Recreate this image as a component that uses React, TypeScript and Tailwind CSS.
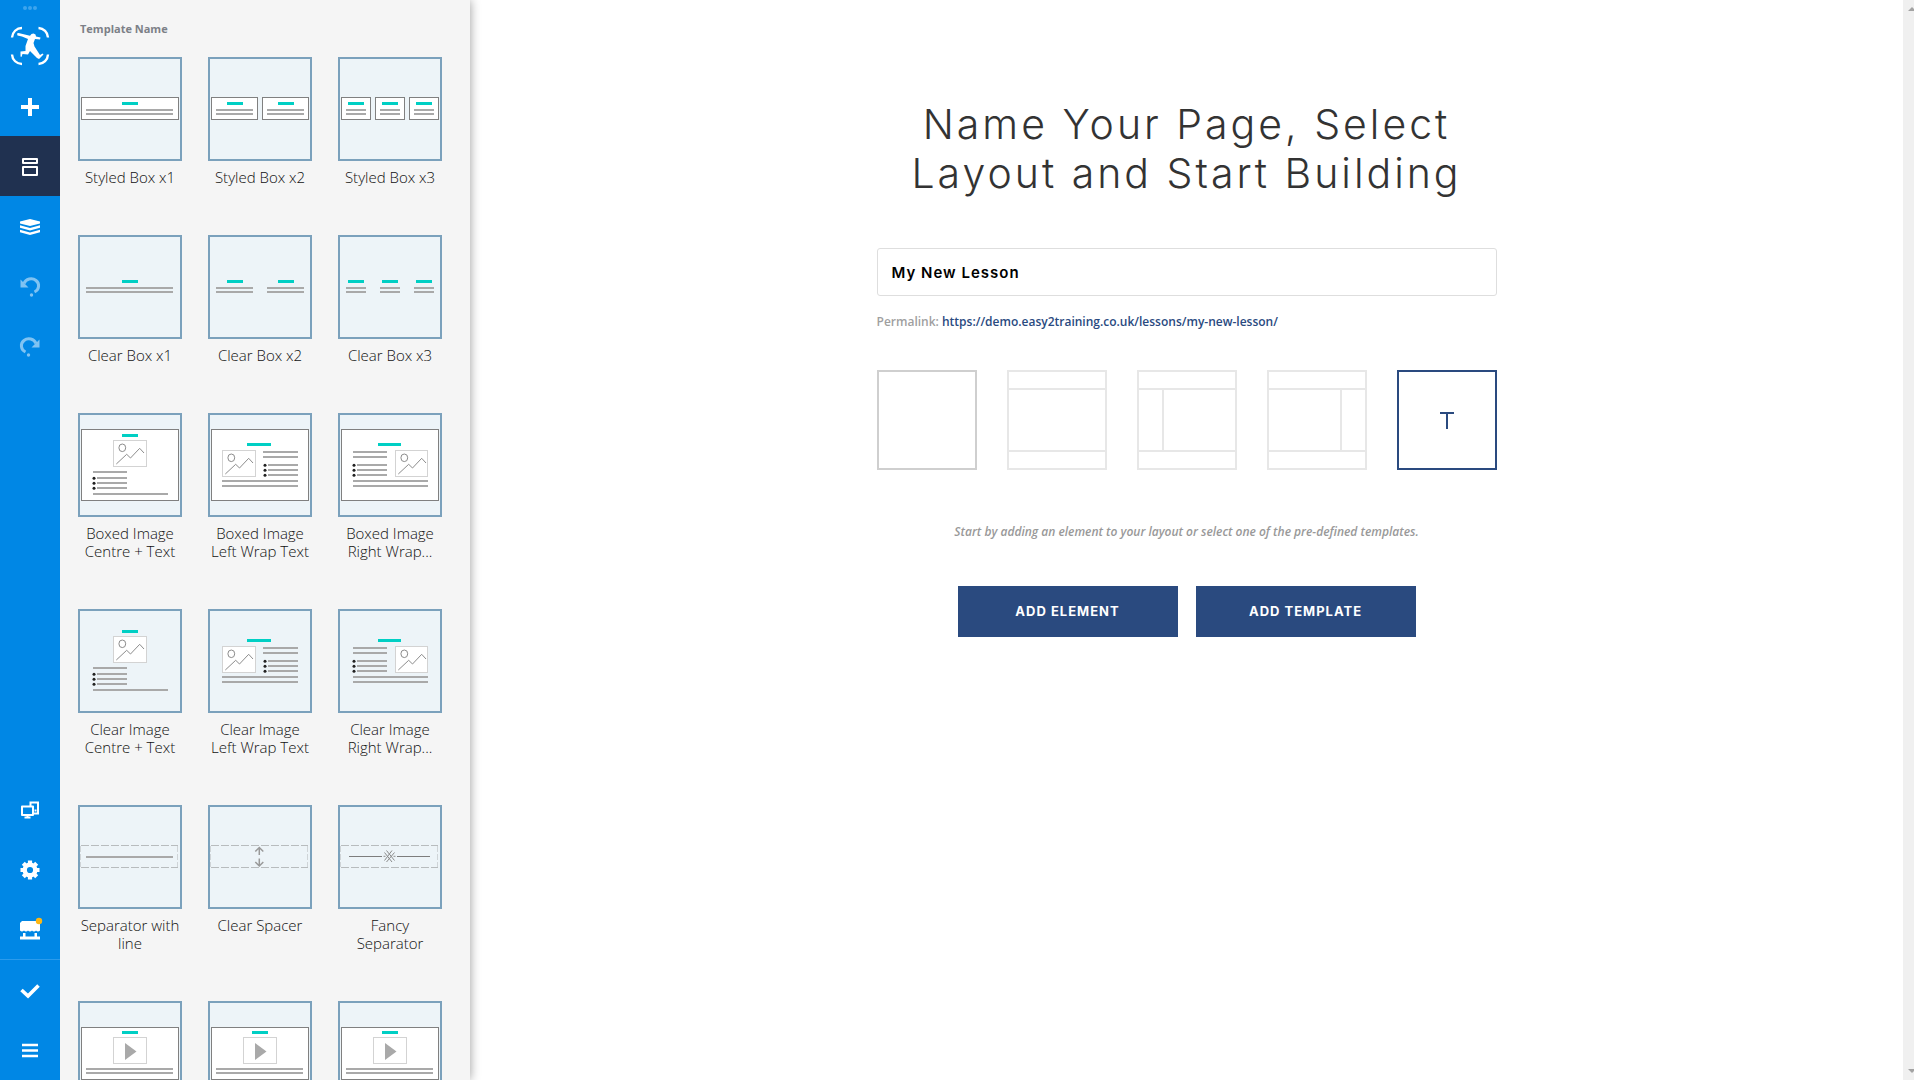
import React, { useState } from "react"

    const TEAL = '#00cfc4';
    const GREY = '#a9a9a9';

    const Bar = ({ x, y, w }: { x: number; y: number; w: number }) => (
      <rect x={x} y={y} width={w} height={2} fill={GREY} />
    );

    const Heading = ({ x, y, w = 16 }: { x: number; y: number; w?: number }) => (
      <rect x={x} y={y} width={w} height={3} fill={TEAL} />
    );

    const Frame = ({ x = 1, y, w = 98, h }: { x?: number; y: number; w?: number; h: number }) => (
      <rect x={x + 0.5} y={y + 0.5} width={w - 1} height={h - 1} fill="#fff" stroke="#808080" />
    );

    const Picture = ({ x, y, w = 34 }: { x: number; y: number; w?: number }) => (
      <g transform={`translate(${x} ${y})`} fill="none">
        <rect x={0.5} y={0.5} width={w - 1} height={26} fill="#fff" stroke="#d3d3d3" />
        <ellipse cx={9.3} cy={7.8} rx={3.4} ry={3.8} stroke="#8c8c8c" />
        <path d="M3.3 24 13.7 14.3 17.5 18 26.7 8.3 31 13" stroke="#8c8c8c" />
      </g>
    );

    const Bullets = ({ x, y, w }: { x: number; y: number; w: number }) => (
      <>
        {[0, 5, 10].map((dy) => (
          <g key={dy}>
            <circle cx={x + 1} cy={y + dy + 1.2} r={1.5} fill="#222" />
            <Bar x={x + 4} y={y + dy} w={w} />
          </g>
        ))}
      </>
    );

    const DashedBox = () => (
      <g fill="none" stroke="#b8bcbe">
        <path d="M1 38.5H98M1 60.5H98" strokeDasharray="8 2" />
        <path d="M.5 39V60M97.5 39V60" strokeDasharray="6 2" stroke="#cfd4d7" />
      </g>
    );

    // x, column width for the one, two and three box templates
    const columns: Record<number, { x: number; w: number }[]> = {
      1: [{ x: 1, w: 98 }],
      2: [{ x: 1, w: 47 }, { x: 52, w: 47 }],
      3: [{ x: 1, w: 30 }, { x: 35, w: 30 }, { x: 69, w: 30 }],
    };

    const Boxes = ({ count, boxed }: { count: number; boxed?: boolean }) => (
      <>
        {columns[count].map(({ x, w }) => (
          <g key={x}>
            {boxed && <Frame x={x} y={38} w={w} h={23} />}
            <Heading x={x + Math.ceil((w - 16) / 2)} y={43} />
            <Bar x={x + 5} y={50} w={w === 98 ? 87 : w - 10} />
            <Bar x={x + 5} y={54} w={w === 98 ? 87 : w - 10} />
          </g>
        ))}
      </>
    );

    const ImageCentre = ({ boxed }: { boxed?: boolean }) => (
      <>
        {boxed && <Frame y={14} h={72} />}
        <Heading x={42} y={19} />
        <Picture x={33} y={25} />
        <Bar x={13} y={56} w={34} />
        <Bullets x={13} y={62} w={30} />
        <Bar x={13} y={78} w={75} />
      </>
    );

    const ImageLeft = ({ boxed }: { boxed?: boolean }) => (
      <>
        {boxed && <Frame y={14} h={72} />}
        <Heading x={37} y={28} w={24} />
        <Picture x={12} y={35} />
        <Bar x={53} y={36} w={35} />
        <Bar x={53} y={41} w={35} />
        <Bullets x={54} y={49} w={30} />
        <Bar x={12} y={65} w={76} />
        <Bar x={12} y={70} w={76} />
      </>
    );

    const ImageRight = ({ boxed }: { boxed?: boolean }) => (
      <>
        {boxed && <Frame y={14} h={72} />}
        <Heading x={38} y={28} w={23} />
        <Picture x={55} y={35} w={33} />
        <Bar x={13} y={36} w={34} />
        <Bar x={13} y={41} w={34} />
        <Bullets x={13} y={49} w={30} />
        <Bar x={13} y={65} w={75} />
        <Bar x={13} y={70} w={75} />
      </>
    );

    const Video = () => (
      <>
        <Frame y={24} h={53} />
        <Heading x={42} y={28} />
        <rect x={33.5} y={34.5} width={33} height={26} fill="#fff" stroke="#d3d3d3" />
        <path d="M45 40V57L56.5 48.5Z" fill={GREY} />
        <Bar x={6} y={65} w={87} />
        <Bar x={6} y={69} w={87} />
      </>
    );

    const SeparatorLine = () => (
      <>
        <DashedBox />
        <Bar x={6} y={49} w={87} />
      </>
    );

    const Spacer = () => (
      <>
        <DashedBox />
        <path d="M49.3 48V40.5M45.3 44.5 49.3 40.5 53.3 44.5M49.3 51.5V59M45.3 55 49.3 59 53.3 55" fill="none" stroke="#999" strokeWidth={1.5} />
      </>
    );

    const FancySeparator = () => (
      <>
        <DashedBox />
        <path d="M9 49.5H42M57 49.5H90" stroke="#7d7d7d" />
        <path d="M44.5 45.5 52 55M46.5 43.5 54.5 53.5M54.5 45.5 46.5 55M52 43.5 44.5 53.5M43.5 49.3h2M53.5 49.3h2" stroke="#8c8c8c" fill="none" />
      </>
    );

    const templates = [
      { name: 'Styled Box x1', art: <Boxes count={1} boxed /> },
      { name: 'Styled Box x2', art: <Boxes count={2} boxed /> },
      { name: 'Styled Box x3', art: <Boxes count={3} boxed /> },
      { name: 'Clear Box x1', art: <Boxes count={1} /> },
      { name: 'Clear Box x2', art: <Boxes count={2} /> },
      { name: 'Clear Box x3', art: <Boxes count={3} /> },
      { name: 'Boxed Image Centre + Text', art: <ImageCentre boxed /> },
      { name: 'Boxed Image Left Wrap Text', art: <ImageLeft boxed /> },
      { name: 'Boxed Image Right Wrap...', art: <ImageRight boxed /> },
      { name: 'Clear Image Centre + Text', art: <ImageCentre /> },
      { name: 'Clear Image Left Wrap Text', art: <ImageLeft /> },
      { name: 'Clear Image Right Wrap...', art: <ImageRight /> },
      { name: 'Separator with line', art: <SeparatorLine /> },
      { name: 'Clear Spacer', art: <Spacer /> },
      { name: 'Fancy Separator', art: <FancySeparator /> },
    ];

    const videoTemplates = ['Video x1', 'Video x2', 'Video x3'];

    const icons = {
      plus: <path d="M12 3v18M3 12h18" stroke="#fff" strokeWidth={4} />,
      layout: <path d="M5 4h14v4H5zM5 12h14v8H5z" fill="none" stroke="#fff" strokeWidth={2} strokeLinejoin="round" />,
      layers: (
        <g fill="#fff">
          <path d="M12 4 22 6.4V8.4L12 11 2 8.4V6.4Z" />
          <path d="M2 10.3 12 13 22 10.3V12.8L12 15.6 2 12.8Z" />
          <path d="M2 14.8 12 17.4 22 14.8V17.3L12 20 2 17.3Z" />
        </g>
      ),
      undo: (
        <g fill="none" stroke="#fff" strokeWidth={3} opacity={0.5}>
          <path d="M6 8.5A7.5 7 0 1 1 16.5 17" />
          <path d="M2.5 4.5v8h8L7.8 9.8 5.5 7.5Z" fill="#fff" stroke="none" />
          <circle cx={13.5} cy={20} r={1.7} fill="#fff" stroke="none" />
        </g>
      ),
      redo: (
        <g fill="none" stroke="#fff" strokeWidth={3} opacity={0.5}>
          <path d="M18 8.5A7.5 7 0 1 0 7.5 17" />
          <path d="M21.5 4.5v8h-8L16.2 9.8 18.5 7.5Z" fill="#fff" stroke="none" />
          <circle cx={10.5} cy={20} r={1.7} fill="#fff" stroke="none" />
        </g>
      ),
      devices: (
        <g fill="none" stroke="#fff" strokeWidth={2}>
          <path d="M12.5 8V4.5h7.5V15.5h-5M16.5 12.5h2" />
          <path d="M4 8.5h11v8.5H4z" strokeLinejoin="round" />
          <path d="M6.5 19.5h6M9.5 17v3" />
        </g>
      ),
      gear: (
        <g>
          <circle cx={12} cy={12} r={5.3} fill="none" stroke="#fff" strokeWidth={4.4} />
          <path d="M12 2.5v3M12 18.5v3M2.5 12h3M18.5 12h3M5.3 5.3l2 2M16.7 16.7l2 2M5.3 18.7l2-2M16.7 7.3l2-2" stroke="#fff" strokeWidth={4.2} />
        </g>
      ),
      store: (
        <g fill="#fff">
          <path d="M4 3H20L22 6V12.5a2.5 1.8 0 0 1-4 0a2.3 1.8 0 0 1-4 0a2.3 1.8 0 0 1-4 0a2.3 1.8 0 0 1-4 0a2.5 1.8 0 0 1-4 0V5Z" />
          <path d="M5 15h2.5v3.5h9V15H19v3.5h3V21.5H2V18.5H5Z" />
          <circle cx={21} cy={3} r={3.2} fill="#fdb714" />
        </g>
      ),
      check: <path d="M3.5 11 10 17 20.5 6.5" fill="none" stroke="#fff" strokeWidth={3.6} />,
      menu: <path d="M4 6h16M4 11.5h16M4 17h16" stroke="#fff" strokeWidth={2.6} />,
    };

    type IconName = keyof typeof icons;

    const tools: { label: string; icon: IconName; active?: boolean }[] = [
      { label: 'Add element', icon: 'plus' },
      { label: 'Templates', icon: 'layout', active: true },
      { label: 'Layers', icon: 'layers' },
      { label: 'Undo', icon: 'undo' },
      { label: 'Redo', icon: 'redo' },
    ];

    const settings: { label: string; icon: IconName }[] = [
      { label: 'Responsive view', icon: 'devices' },
      { label: 'Settings', icon: 'gear' },
      { label: 'Store', icon: 'store' },
    ];

    const actions: { label: string; icon: IconName }[] = [
      { label: 'Publish', icon: 'check' },
      { label: 'Menu', icon: 'menu' },
    ];

    const ToolButton = ({ label, icon, active }: { label: string; icon: IconName; active?: boolean }) => (
      <button
        type="button"
        aria-label={label}
        className={`flex h-15 w-full shrink-0 items-center justify-center pt-0.5 ${active ? 'bg-[#203150]' : ''}`}
      >
        <svg className="size-6 overflow-visible" viewBox="0 0 24 24">{icons[icon]}</svg>
      </button>
    );

    const Sidebar = () => (
      <nav className="z-20 flex w-15 shrink-0 flex-col bg-[#0087e5]">
        <div className="flex h-19 shrink-0 flex-col items-center gap-4 pt-1.5">
          <svg className="h-1 w-4" viewBox="0 0 16 4" fill="#3da4ee">
            <circle cx={3} cy={2} r={2} />
            <circle cx={8} cy={2} r={2} />
            <circle cx={13} cy={2} r={2} />
          </svg>
          <svg className="size-10" viewBox="0 0 40 40">
            <path d="M2 11.5A10 10 0 0 1 12 2M28.5 2A10 10 0 0 1 38 11.5M38 28.5A10 10 0 0 1 28.5 38M12 38A10 10 0 0 1 2 28.5" fill="none" stroke="#fff" strokeWidth={2.4} />
            <path d="M7 7.5 8.5 7 20 9.8 21.5 8 23.5 7.5 25.5 8.5 26 10.5 30.5 11.5 30 13.5 25 13 23.5 17 24.5 20.5 30 29 32.5 27.5 33.5 28.5 29 33 27 32 20 25 18 28.5 12.5 28 11.5 31 10.5 30.5 10.5 25.5 15.5 25 15.5 20 18 13 12 10.5 7.5 9.5Z" fill="#fff" />
          </svg>
        </div>
        {tools.map((tool) => (
          <ToolButton key={tool.label} {...tool} />
        ))}
        <div className="mt-auto border-b border-[#2b9bec]">
          {settings.map((tool) => (
            <ToolButton key={tool.label} {...tool} />
          ))}
        </div>
        {actions.map((tool) => (
          <ToolButton key={tool.label} {...tool} />
        ))}
      </nav>
    );

    const Thumbnail = ({ children }: { children: React.ReactNode }) => (
      <span className="block size-[104px] border-2 border-[#7ba1bc] bg-[#edf4f8]">
        <svg className="size-full" viewBox="0 0 100 100">{children}</svg>
      </span>
    );

    const TemplatePanel = () => (
      <aside className="z-10 w-[410px] shrink-0 overflow-hidden bg-[#f5f5f5] pl-[18px] pt-5 shadow-[0_0_10px_rgba(0,0,0,0.4)]">
        <h2 className="mb-[19px] pl-0.5 text-[11px] leading-[18px] font-bold text-[#7c8087]">Template Name</h2>
        <div className="grid grid-cols-[repeat(3,104px)] items-start gap-x-[26px]">
          {templates.map((template) => (
            <button key={template.name} type="button" className="flex flex-col items-center gap-[7px] pb-[49px]">
              <Thumbnail>{template.art}</Thumbnail>
              <span className="text-[15px] leading-[18px] font-light text-[#111]">{template.name}</span>
            </button>
          ))}
          {videoTemplates.map((name) => (
            <button key={name} type="button" aria-label={name}>
              <Thumbnail><Video /></Thumbnail>
            </button>
          ))}
        </div>
      </aside>
    );

    const LayoutOption = ({ name }: { name: string }) => {
      if (name === 'blank') {
        return <span className="block size-full border-2 border-[#cfcfcf]"></span>;
      }
      if (name === 'template') {
        return (
          <span className="flex size-full items-center justify-center border-2 border-[#2a4a7f]">
            <svg className="h-[17px] w-3.5" viewBox="0 0 14 17">
              <path d="M0 1H14M7 1V17" stroke="#2a4a7f" strokeWidth={2} />
            </svg>
          </span>
        );
      }
      return (
        <span className="flex size-full flex-col border-2 border-[#e7e7e7]">
          <span className="h-[18px] border-b-2 border-[#e7e7e7]"></span>
          <span className="flex flex-1">
            {name === 'left' && <span className="w-[25px] border-r-2 border-[#e7e7e7]"></span>}
            {name === 'right' && <span className="ml-auto w-[25px] border-l-2 border-[#e7e7e7]"></span>}
          </span>
          <span className="h-[18px] border-t-2 border-[#e7e7e7]"></span>
        </span>
      );
    };

    const layouts = ['blank', 'full', 'left', 'right', 'template'];

    const StartScreen = () => {
      const [title, setTitle] = useState('My New Lesson');

      return (
        <main className="flex min-w-0 flex-1 flex-col items-center overflow-hidden bg-white pt-[100px]">
          <h1 className="text-center font-['Inter'] text-[41px] leading-[49px] font-light tracking-[3px] text-[#333]">
            Name Your Page, Select<br />Layout and Start Building
          </h1>
          <div className="mt-[50px] w-full max-w-[620px]">
            <input
              type="text"
              aria-label="Page name"
              value={title}
              onChange={(e) => setTitle(e.target.value)}
              className="h-12 w-full rounded-[3px] border border-[#dedede] px-3.5 font-['Inter'] text-[15px] font-semibold tracking-[1px] text-black"
            />
            <p className="mt-[17px] text-[12px] leading-[18px] font-semibold text-[#9f9f9f]">
              Permalink: <a href="#my-new-lesson" className="text-[#2a4a7f]">https://demo.easy2training.co.uk/lessons/my-new-lesson/</a>
            </p>
            <div className="mt-[39px] flex justify-between">
              {layouts.map((name) => (
                <button key={name} type="button" aria-label={`${name} layout`} className="size-[100px]">
                  <LayoutOption name={name} />
                </button>
              ))}
            </div>
          </div>
          <p className="mt-[53px] text-[12px] leading-[18px] font-semibold text-[#999] italic">
            Start by adding an element to your layout or select one of the pre-defined templates.
          </p>
          <div className="mt-[45px] flex gap-[18px]">
            <button type="button" className="h-[51px] w-[220px] bg-[#2a4a7f] font-['Inter'] text-[13px] font-bold tracking-[1px] text-white">ADD ELEMENT</button>
            <button type="button" className="h-[51px] w-[220px] bg-[#2a4a7f] font-['Inter'] text-[13px] font-bold tracking-[1px] text-white">ADD TEMPLATE</button>
          </div>
        </main>
      );
    };

    const ScrollTrack = () => (
      <div className="flex w-[11px] shrink-0 flex-col items-end justify-between overflow-hidden bg-[#f0f0f0] py-[7px]">
        <svg className="h-1 w-1.5" viewBox="0 0 6 4" fill="#a3a3a3"><path d="M0 4 4 0 6 2V4Z" /></svg>
        <svg className="h-1 w-1.5" viewBox="0 0 6 4" fill="#a3a3a3"><path d="M0 0 4 4 6 2V0Z" /></svg>
      </div>
    );

    const App = () => {
      return (
        <div className="flex h-screen overflow-hidden font-['Open_Sans',sans-serif]">
          <Sidebar />
          <TemplatePanel />
          <StartScreen />
          <ScrollTrack />
        </div>
      );
    };

    export default App;
